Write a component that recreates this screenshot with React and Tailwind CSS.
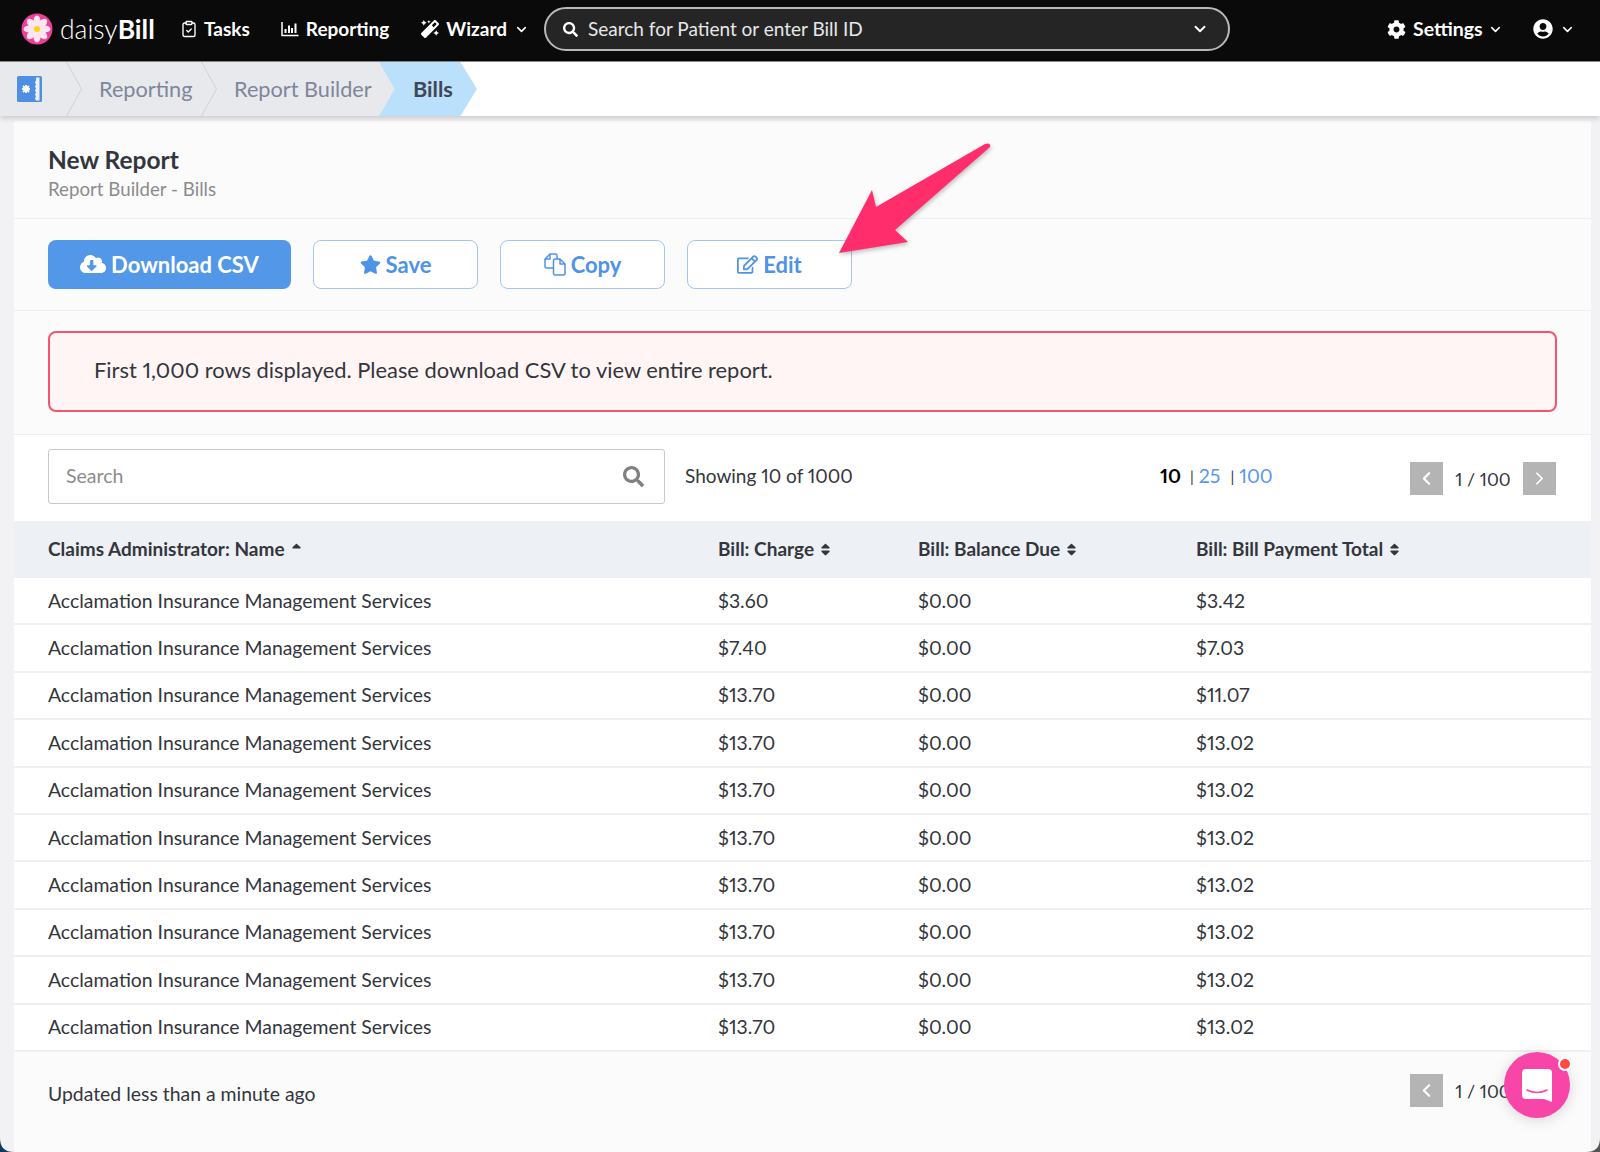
// App.jsx - daisyBill report builder page
import React from "react";
import { ChevronDown, ChevronLeft, ChevronRight, ClipboardCheck } from "lucide-react";
import {
  FaCloudDownloadAlt,
  FaCog,
  FaMagic,
  FaRegEdit,
  FaSearch,
  FaSort,
  FaSortUp,
  FaStar,
  FaUserCircle,
} from "react-icons/fa";

const rows = [
  ["$3.60", "$3.42"],
  ["$7.40", "$7.03"],
  ["$13.70", "$11.07"],
  ["$13.70", "$13.02"],
  ["$13.70", "$13.02"],
  ["$13.70", "$13.02"],
  ["$13.70", "$13.02"],
  ["$13.70", "$13.02"],
  ["$13.70", "$13.02"],
  ["$13.70", "$13.02"],
];

const Logo = () => (
  <svg width="32" height="32" viewBox="0 0 32 32">
    <circle cx="16" cy="16" r="15.5" fill="#ec3f97" />
    {[0, 45, 90, 135, 180, 225, 270, 315].map((a) => (
      <ellipse key={a} cx="16" cy="8.5" rx="3.6" ry="6" fill="#fde6ef" transform={`rotate(${a} 16 16)`} />
    ))}
    <circle cx="16" cy="16" r="3" fill="#fbd30f" />
  </svg>
);

const ChartIcon = () => (
  <svg width="18" height="16" viewBox="0 0 18 16" fill="none" stroke="#fff">
    <path d="M1 1v13.5h16.5" strokeWidth="1.5" />
    <path d="M4.5 12V8M8 12V4.5M11 12V7M14.5 12V2.5" strokeWidth="2" />
  </svg>
);

const CopyIcon = () => (
  <svg width="22" height="23" viewBox="0 0 22 23" fill="none" stroke="currentColor" strokeWidth="1.5" strokeLinejoin="round">
    <path d="M10 15H2.5Q1 15 1 13.5V6L6 1H11.5Q13 1 13 2.5V6" />
    <path d="M6 1V6H1" />
    <path d="M9.5 7.5Q9.5 6 11 6H16L21 11V20.5Q21 22 19.5 22H11Q9.5 22 9.5 20.5Z" fill="#fff" />
    <path d="M16 6V11H21" />
  </svg>
);

const CrumbChevron = () => (
  <svg width="16" height="54" viewBox="0 0 16 54" fill="none" className="shrink-0">
    <path d="M0.5 0L15.5 27L0.5 54" stroke="#cfd1d6" />
  </svg>
);

const HomeIcon = () => (
  <svg width="25" height="26" viewBox="0 0 25 26">
    <rect width="25" height="26" rx="1.5" fill="#4f8fe3" />
    <path d="M19 1.5h3.5v23H19l-1-2 1-2-1-2 1-2-1-2 1-2-1-2 1-2-1-2 1-2z" fill="#eef3fb" />
    <path d="M5 13h8M9 9v8M6 10l6 6M12 10l-6 6" stroke="#fff" strokeWidth="1.8" />
  </svg>
);

const PageButton = ({ children }) => (
  <div className="w-[33px] h-[33px] bg-[#b4b4b4] flex items-center justify-center text-white">{children}</div>
);

const Pager = () => (
  <div className="flex items-center text-[18px]">
    <PageButton><ChevronLeft size={21} strokeWidth={2.5} /></PageButton>
    <span className="w-[80px] text-center pt-[3px]">1 / 100</span>
    <PageButton><ChevronRight size={21} strokeWidth={2} /></PageButton>
  </div>
);

const OutlineButton = ({ icon, label }) => (
  <button className="w-[165px] h-[49px] rounded-lg border border-[#a3c5f0] bg-white flex items-center justify-center gap-[5px] pb-[1px] text-[#4f93e6] text-[22px] font-bold">
    {icon}
    {label}
  </button>
);

const SortHead = ({ label, icon }) => (
  <div className="flex items-center gap-[4px] font-bold text-[19px] text-[#33363c]">
    {label}
    {icon}
  </div>
);

export default function App() {
  return (
    <div className="relative h-[1152px] overflow-hidden bg-[#f2f2f4] font-['Lato',sans-serif] text-[#33363c] [font-variant-numeric:proportional-nums]">
      {/* Top nav */}
      <header className="h-[62px] bg-[#0a0a0a] border-b border-[#8a8a8a] flex items-center text-white pl-[21px] pb-[3px]">
        <Logo />
        <div className="ml-[7px] w-[99px] text-[26.5px] leading-none">
          <span className="font-light">daisy</span>
          <span className="font-bold">Bill</span>
        </div>
        <nav className="flex items-center font-bold text-[19px]">
          <div className="ml-[21px] flex items-center gap-[6px]">
            <ClipboardCheck size={18} strokeWidth={1.8} />
            Tasks
          </div>
          <div className="ml-[31px] flex items-center gap-[7px]">
            <ChartIcon />
            Reporting
          </div>
          <div className="ml-[32px] flex items-center gap-[7px]">
            <FaMagic size={18} />
            Wizard
            <ChevronDown size={15} strokeWidth={2.5} />
          </div>
        </nav>
        <div className="ml-[15px] w-[686px] h-[44px] rounded-full border-2 border-[#b9b9b9] bg-[#252525] flex items-center pl-[17px] pr-[19px]">
          <FaSearch size={15} />
          <span className="ml-[10px] flex-1 text-[19px] text-[#e8e8e8]">Search for Patient or enter Bill ID</span>
          <ChevronDown size={18} strokeWidth={2.5} />
        </div>
        <div className="ml-[157px] flex items-center font-bold text-[19.5px]">
          <FaCog size={19} />
          <span className="ml-[7px]">Settings</span>
          <ChevronDown size={15} strokeWidth={2.5} className="ml-[5px]" />
          <FaUserCircle size={20} className="ml-[30px]" />
          <ChevronDown size={15} strokeWidth={2.5} className="ml-[7px]" />
        </div>
      </header>

      {/* Breadcrumb */}
      <div className="h-[54px] bg-white flex shadow-[0_2px_6px_rgba(0,0,0,0.18)] relative text-[21.7px]">
        <div className="w-[396px] bg-[#e8e9ed] flex items-center text-[#7f8699]">
          <div className="w-[66px] flex justify-end pr-[24px]">
            <HomeIcon />
          </div>
          <CrumbChevron />
          <span className="ml-[17px] w-[102px]">Reporting</span>
          <CrumbChevron />
          <span className="ml-[17px]">Report Builder</span>
        </div>
        <div className="-ml-[17px] w-[98px] bg-[#bbe0fb] flex items-center pl-[34px] font-bold text-[#3f4757] [clip-path:polygon(0_0,83%_0,100%_50%,83%_100%,0_100%,16%_50%)]">
          Bills
        </div>
      </div>

      {/* Report card */}
      <main className="mt-[5px] ml-[14px] mr-[9px] bg-[#fbfbfc] h-[1031px] flex flex-col">
        <section className="h-[98px] border-b border-[#eeeeee] pl-[34px] pt-[23px] shrink-0">
          <h1 className="font-bold text-[24.5px] leading-[32px] text-[#33363c]">New Report</h1>
          <p className="text-[18.7px] leading-[26px] text-[#8c8c8c]">Report Builder - Bills</p>
        </section>

        <section className="h-[92px] border-b border-[#eeeeee] pl-[34px] flex items-center gap-[22px] shrink-0">
          <button className="w-[243px] h-[49px] rounded-lg bg-[#5398e8] flex items-center justify-center gap-[5px] pb-[1px] text-white text-[22px] font-bold">
            <FaCloudDownloadAlt size={26} />
            Download CSV
          </button>
          <OutlineButton icon={<FaStar size={21} />} label="Save" />
          <OutlineButton icon={<CopyIcon />} label="Copy" />
          <OutlineButton icon={<FaRegEdit size={21} />} label="Edit" />
        </section>

        <section className="h-[124px] border-b border-[#eeeeee] px-[34px] flex items-center shrink-0">
          <div className="w-full h-[81px] rounded-lg border-2 border-[#f4546f] bg-[#fff5f5] flex items-center pl-[44px] pb-[1px] text-[21.9px] -mt-[3px]">
            First 1,000 rows displayed. Please download CSV to view entire report.
          </div>
        </section>

        <section className="h-[86px] bg-white pl-[34px] flex items-center shrink-0 text-[19.5px]">
          <div className="w-[617px] h-[55px] -mt-[4px] rounded-[3px] border border-[#c9c9c9] bg-white flex items-center justify-between pl-[17px] pr-[20px] text-[#8c8c8c]">
            Search
            <FaSearch size={21} className="text-[#808080]" />
          </div>
          <span className="ml-[20px] w-[475px] -mt-[4px] text-[19px]">Showing 10 of 1000</span>
          <div className="w-[250px] flex items-center -mt-[4px]">
            <span className="font-bold text-black">10</span>
            <span className="ml-[9px] text-[15px]">|</span>
            <span className="ml-[5px] text-[#5a97ee]">25</span>
            <span className="ml-[10px] text-[15px]">|</span>
            <span className="ml-[5px] text-[#5a97ee]">100</span>
          </div>
          <Pager />
        </section>

        {/* Table */}
        <div className="grid grid-cols-[670px_200px_278px_1fr] pl-[34px] h-[57px] items-center bg-[#edf0f5] shrink-0">
          <SortHead label="Claims Administrator: Name" icon={<FaSortUp size={15} />} />
          <SortHead label="Bill: Charge" icon={<FaSort size={15} />} />
          <SortHead label="Bill: Balance Due" icon={<FaSort size={15} />} />
          <SortHead label="Bill: Bill Payment Total" icon={<FaSort size={15} />} />
        </div>
        <div className="bg-white shrink-0">
          {rows.map((r, i) => (
            <div
              key={i}
              className="grid grid-cols-[670px_200px_278px_1fr] pl-[34px] pb-[1px] h-[47.4px] items-center border-b-2 border-[#f0f0f0] text-[19.4px]"
            >
              <span>Acclamation Insurance Management Services</span>
              <span>{r[0]}</span>
              <span>$0.00</span>
              <span>{r[1]}</span>
            </div>
          ))}
        </div>

        <footer className="flex-1 pl-[34px] pr-[35px] pt-[22px] flex items-start justify-between">
          <span className="text-[19.4px] mt-[5px]">Updated less than a minute ago</span>
          <Pager />
        </footer>
      </main>

      {/* Pink annotation arrow */}
      <svg className="absolute left-[830px] top-[135px]" width="170" height="130" viewBox="830 135 170 130">
        <path
          d="M839 253L872 190L876 207L985 144Q991 142 990 147L895 230L908 242Z"
          fill="#ff2d6b"
          style={{ filter: "drop-shadow(1px 2px 2px rgba(0,0,0,0.25))" }}
        />
      </svg>

      {/* Chat launcher */}
      <div className="absolute left-[1504px] top-[1052px] w-[66px] h-[66px] rounded-full bg-[#f845a8] shadow-[0_2px_14px_rgba(0,0,0,0.15)] flex items-center justify-center">
        <svg width="30" height="33" viewBox="0 0 30 33">
          <path d="M4 0H26Q30 0 30 4V33L22 30H4Q0 30 0 26V4Q0 0 4 0Z" fill="#fff" />
          <path d="M5 21Q15 26 25 21" fill="none" stroke="#f845a8" strokeWidth="1.6" strokeLinecap="round" />
        </svg>
      </div>
      <div className="absolute left-[1558px] top-[1057px] w-[14px] h-[14px] rounded-full bg-[#ff4a3d] border-2 border-white" />

      {/* Window corners */}
      <svg className="absolute left-0 bottom-0" width="14" height="14" viewBox="0 0 14 14">
        <path d="M0 0Q0 14 14 14H0Z" fill="#0f3b5c" />
      </svg>
      <svg className="absolute right-0 bottom-0" width="14" height="14" viewBox="0 0 14 14">
        <path d="M14 0Q14 14 0 14H14Z" fill="#555" />
      </svg>
    </div>
  );
}
